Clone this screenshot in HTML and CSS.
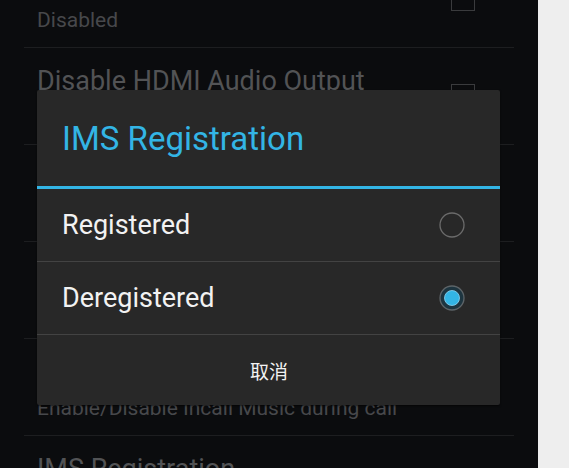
FILE: index.html
```html
<!DOCTYPE html>
<html>
<head>
<meta charset="utf-8">
<link rel="stylesheet" href="styles.css">
</head>
<body>
<div class="page">
  <div class="screen">
    <div class="list">
      <div class="row">
        <div class="texts">
          <div class="title">Disable HDMI Video Output</div>
          <div class="summary">Disabled</div>
        </div>
        <div class="check"></div>
      </div>
      <div class="row">
        <div class="texts">
          <div class="title">Disable HDMI Audio Output</div>
          <div class="summary">Disabled</div>
        </div>
        <div class="check"></div>
      </div>
      <div class="row">
        <div class="texts">
          <div class="title">Enable Loopback</div>
          <div class="summary">Disabled</div>
        </div>
        <div class="check"></div>
      </div>
      <div class="row">
        <div class="texts">
          <div class="title">Enable Proxy Audio</div>
          <div class="summary">Disabled</div>
        </div>
        <div class="check"></div>
      </div>
      <div class="row">
        <div class="texts">
          <div class="title">Incall Music</div>
          <div class="summary">Enable/Disable Incall Music during call</div>
        </div>
        <div class="check"></div>
      </div>
      <div class="row">
        <div class="texts">
          <div class="title">IMS Registration</div>
          <div class="summary">Deregistered</div>
        </div>
      </div>
    </div>

    <div class="dialog">
      <div class="dlg-title">IMS Registration</div>
      <div class="dlg-item">
        <span class="item-label">Registered</span>
        <svg class="radio" width="28" height="28" viewBox="0 0 28 28">
          <circle cx="14" cy="14" r="12" fill="none" stroke="#6b6b6b" stroke-width="1.3"/>
        </svg>
      </div>
      <div class="dlg-item">
        <span class="item-label">Deregistered</span>
        <svg class="radio" width="28" height="28" viewBox="0 0 28 28">
          <circle cx="14" cy="14" r="12" fill="#1d3540" stroke="#5d6468" stroke-width="1.3"/>
          <circle cx="14" cy="14" r="7.5" fill="#33b5e5" stroke="#8fd6f2" stroke-width="0.8"/>
        </svg>
      </div>
      <div class="dlg-button">取消</div>
    </div>
  </div>
  <div class="side"></div>
</div>
</body>
</html>
```

FILE: styles.css
```css
html, body {
  margin: 0;
  padding: 0;
}

body {
  background: #eeeeee;
  font-family: Roboto, "Noto Sans", "Noto Sans CJK SC", sans-serif;
  overflow: hidden;
}

.page {
  display: flex;
  width: 569px;
  height: 468px;
}

.screen {
  position: relative;
  width: 538px;
  height: 468px;
  background: #0b0c0e;
  overflow: hidden;
  flex: none;
}

.side {
  flex: 1;
  background: #eeeeee;
}

.list {
  margin-top: -49px;
  padding: 0 24px;
}

.row {
  height: 96px;
  border-bottom: 1px solid #1d1e20;
  display: flex;
  align-items: center;
}

.texts {
  flex: 1;
  align-self: flex-start;
  padding: 17px 0 0 13px;
}

.title {
  font-size: 27px;
  line-height: 32px;
  color: #525355;
  white-space: nowrap;
}

.summary {
  margin-top: 6px;
  font-size: 21px;
  line-height: 28px;
  color: #47484b;
  white-space: nowrap;
}

.check {
  width: 22px;
  height: 22px;
  border: 1.5px solid #3a3b3d;
  margin-right: 39px;
  flex: none;
}

.dialog {
  position: absolute;
  left: 37px;
  top: 90px;
  width: 463px;
  height: 315px;
  background: #282828;
  border-radius: 2px;
  box-shadow: 0 1px 2px rgba(0, 0, 0, 0.6);
  display: flex;
  flex-direction: column;
}

.dlg-title {
  height: 96px;
  border-bottom: 3px solid #33b5e5;
  display: flex;
  align-items: center;
  padding-left: 25px;
  font-size: 33px;
  color: #33b5e5;
  flex: none;
}

.dlg-item {
  height: 72px;
  border-bottom: 1px solid #434343;
  display: flex;
  align-items: center;
  justify-content: space-between;
  padding: 0 34px 0 25px;
  flex: none;
}

.dlg-item:first-of-type {
  height: 71px;
}

.item-label {
  font-size: 27px;
  color: #f2f2f2;
}

.radio {
  display: block;
}

.dlg-button {
  flex: 1;
  display: flex;
  align-items: center;
  justify-content: center;
  font-family: "Noto Sans CJK SC", sans-serif;
  font-size: 19px;
  color: #f2f2f2;
  padding-left: 1px;
}
```
